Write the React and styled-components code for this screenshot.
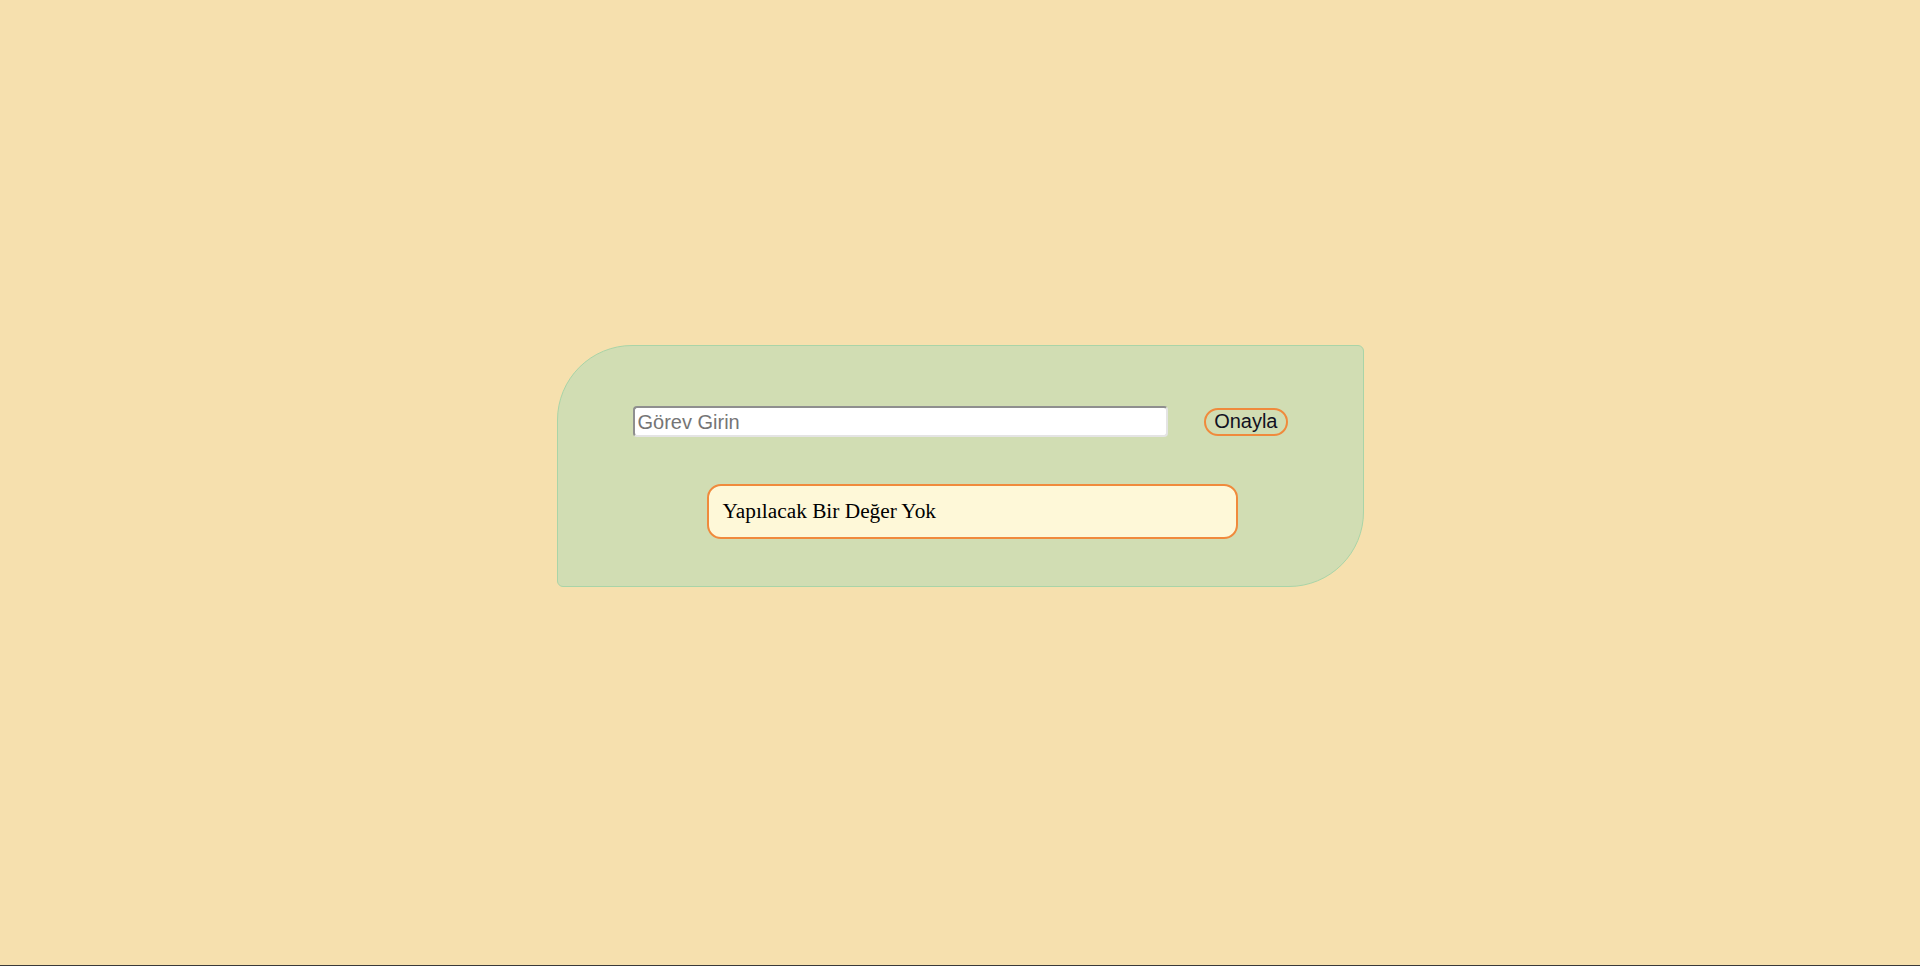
import React, { useState } from 'react';
import styled, { createGlobalStyle } from 'styled-components';

export default function App() {
    const [value, setValue] = useState('');
    const [todos, setTodos] = useState([]);

    const add = () => {
        if (!value.trim()) return;
        setTodos([...todos, value]);
        setValue('');
    };

    return (
        <>
            <GlobalStyle />
            <Page>
                <Card>
                    <Row>
                        <Input
                            placeholder="Görev Girin"
                            value={value}
                            onChange={(e) => setValue(e.target.value)}
                        />
                        <Button onClick={add}>Onayla</Button>
                    </Row>
                    <List>
                        {todos.length === 0 ? (
                            <Item>Yapılacak Bir Değer Yok</Item>
                        ) : (
                            todos.map((t, i) => <Item key={i}>{t}</Item>)
                        )}
                    </List>
                </Card>
            </Page>
        </>
    );
}

/* --- STYLES --- */
const GlobalStyle = createGlobalStyle`
    * { box-sizing: border-box; }
    body {
        margin: 0;
        background: #f6e0ae;
        font-family: "Liberation Serif", "Times New Roman", serif;
    }
`;
const Page = styled.div`
    height: 966px;
    padding-top: 345px;
    border-bottom: 1px solid #3a3a3a;
    display: flex;
    justify-content: center;
    align-items: flex-start;
`;
const Card = styled.div`
    width: 807px;
    height: 242px;
    background: #d1ddb3;
    border: 1px solid #a9d4a8;
    border-radius: 75px 6px 75px 6px;
    padding: 60px 75px 0 75px;
`;
const Row = styled.div`
    display: flex;
    align-items: center;
    gap: 36px;
`;
const Input = styled.input`
    width: 536px;
    height: 31px;
    padding: 1px 3px 0;
    font-family: "Liberation Sans", Arial, sans-serif;
    font-size: 20px;
    color: #222;
    background: #fff;
    border-style: solid;
    border-width: 2px;
    border-color: #8f8f8f #e4e4e4 #e4e4e4 #8f8f8f;
    border-radius: 4px;
    outline: none;
    &::placeholder { color: #757575; }
`;
const Button = styled.button`
    height: 28px;
    padding: 0 8px;
    font-family: "Liberation Sans", Arial, sans-serif;
    font-size: 20px;
    line-height: 23px;
    color: #111122;
    background: transparent;
    border: 2px solid #f08a3c;
    border-radius: 14px;
    cursor: pointer;
`;
const List = styled.div`
    margin-top: 47px;
    padding-left: 74px;
    display: flex;
    flex-direction: column;
    gap: 10px;
`;
const Item = styled.div`
    width: 531px;
    height: 55px;
    display: flex;
    align-items: center;
    padding: 0 14px;
    background: #fef8d8;
    border: 2px solid #f08a3c;
    border-radius: 14px;
    font-size: 21.33px;
    color: #000;
`;
